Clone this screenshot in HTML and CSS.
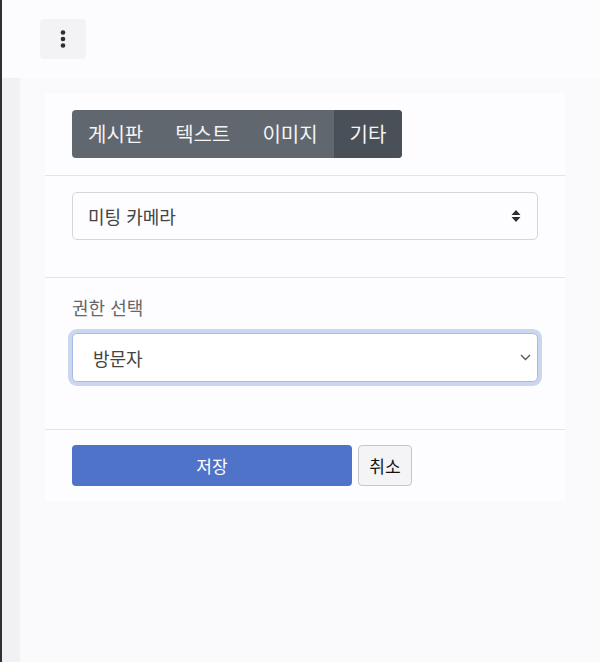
FILE: index.html
```html
<!DOCTYPE html>
<html lang="ko">

<head>
  <meta charset="UTF-8">
  <meta name="viewport" content="width=device-width, initial-scale=1.0">
  <title>권한 설정</title>
  <link rel="stylesheet" href="styles.css">
</head>

<body>
  <div class="app">
    <header class="topbar">
      <button class="menu-btn" type="button" aria-label="menu">
        <svg width="8" height="18" viewBox="0 0 8 18">
          <circle cx="4" cy="2.5" r="2.3" fill="#2f2f33" />
          <circle cx="4" cy="9" r="2.3" fill="#2f2f33" />
          <circle cx="4" cy="15.5" r="2.3" fill="#2f2f33" />
        </svg>
      </button>
    </header>

    <div class="body-row">
      <aside class="rail"></aside>
      <main class="main">
        <div class="card">
          <section class="card-section tabs-section">
            <div class="tab-group">
              <span class="tab">게시판</span>
              <span class="tab">텍스트</span>
              <span class="tab">이미지</span>
              <span class="tab active">기타</span>
            </div>
          </section>

          <section class="card-section type-section">
            <div class="select-box">
              <span>미팅 카메라</span>
              <svg width="10" height="14" viewBox="0 0 10 14">
                <path d="M5 1 L9.5 6 H0.5 Z" fill="#2f2f33" />
                <path d="M5 13 L9.5 8 H0.5 Z" fill="#2f2f33" />
              </svg>
            </div>
          </section>

          <section class="card-section role-section">
            <label class="field-label">권한 선택</label>
            <div class="select-box focused">
              <span>방문자</span>
              <svg width="11" height="7" viewBox="0 0 11 7">
                <path d="M1 1 L5.5 5.5 L10 1" fill="none" stroke="#555" stroke-width="1.3" />
              </svg>
            </div>
          </section>

          <section class="card-section actions">
            <button class="btn btn-save" type="button">저장</button>
            <button class="btn btn-cancel" type="button">취소</button>
          </section>
        </div>
      </main>
    </div>
  </div>
</body>

</html>
```

FILE: styles.css
```css
body {
  margin: 0;
  padding: 0;
  font-family: "Noto Sans CJK KR", "Noto Sans", Arial, sans-serif;
  background-color: #faf9fb;
  color: #333;
}

.app {
  min-height: 662px;
  border-left: 2px solid #2c3037;
  display: flex;
  flex-direction: column;
}

.topbar {
  height: 78px;
  box-sizing: border-box;
  padding: 19px 0 0 38px;
  background-color: #fcfbfd;
}

.menu-btn {
  width: 46px;
  height: 40px;
  border: 0;
  border-radius: 4px;
  background-color: #f3f2f4;
  display: flex;
  justify-content: center;
  align-items: center;
  padding: 0;
}

.body-row {
  flex: 1;
  display: flex;
}

.rail {
  width: 18px;
  background-color: #f1f0f2;
}

.main {
  flex: 1;
  padding: 15px 35px 0 25px;
  background-color: #faf9fb;
}

.card {
  background-color: #fdfcfe;
}

.card-section {
  padding: 0 27px;
  border-bottom: 1px solid #e4e3e6;
}

.tabs-section {
  padding-top: 17px;
  padding-bottom: 17px;
}

.tab-group {
  display: inline-flex;
  background-color: #60676e;
  border-radius: 4px;
  overflow: hidden;
}

.tab {
  height: 48px;
  line-height: 48px;
  padding: 0 16px;
  font-size: 20px;
  color: #f4f4f5;
}

.tab.active {
  background-color: #4a5057;
}

.type-section {
  padding-top: 16px;
  padding-bottom: 37px;
}

.select-box {
  height: 48px;
  box-sizing: border-box;
  border: 1px solid #d6d6d9;
  border-radius: 5px;
  background-color: #fdfcfe;
  display: flex;
  justify-content: space-between;
  align-items: center;
  padding: 0 16px 0 15px;
  font-size: 18px;
  color: #444;
}

.role-section {
  padding-top: 16px;
  padding-bottom: 47px;
}

.field-label {
  display: block;
  font-size: 18px;
  color: #666;
  line-height: 26px;
  margin-bottom: 13px;
}

.select-box.focused {
  height: 49px;
  background-color: #fff;
  border-color: #a6bce6;
  box-shadow: 0 0 0 4px #cbd7ef;
  padding: 0 6px 0 20px;
}

.actions {
  border-bottom: 0;
  padding-top: 15px;
  padding-bottom: 15px;
  display: flex;
  gap: 6px;
}

.btn {
  height: 41px;
  border-radius: 4px;
  font-family: inherit;
  font-size: 17px;
}

.btn-save {
  width: 280px;
  border: 0;
  background-color: #4f73c9;
  color: #fff;
}

.btn-cancel {
  width: 54px;
  padding: 0;
  border: 1px solid #c6c6c9;
  background-color: #f4f4f6;
  color: #111;
}
```
